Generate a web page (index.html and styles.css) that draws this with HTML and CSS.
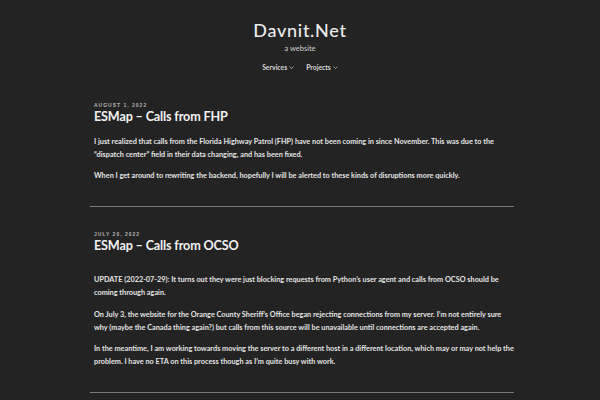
FILE: index.html
```html
<!DOCTYPE html>
<html lang="en">
<head>
<meta charset="utf-8">
<title>Davnit.Net</title>
<link rel="stylesheet" href="styles.css">
</head>
<body>
<header class="site-header">
  <h1 class="site-title">Davnit.Net</h1>
  <p class="tagline">a website</p>
  <nav class="menu">
    <span class="menu-item">Services <svg class="chev" viewBox="0 0 10 6" width="5" height="3"><path d="M1 1l4 4 4-4" fill="none" stroke="currentColor" stroke-width="1.4"/></svg></span>
    <span class="menu-item">Projects <svg class="chev" viewBox="0 0 10 6" width="5" height="3"><path d="M1 1l4 4 4-4" fill="none" stroke="currentColor" stroke-width="1.4"/></svg></span>
  </nav>
</header>
<main class="content">
  <article class="post">
    <div class="post-date">August 1, 2022</div>
    <h2 class="post-title">ESMap – Calls from FHP</h2>
    <div class="post-body">
      <p>I just realized that calls from the Florida Highway Patrol (FHP) have not been coming in since November. This was due to the “dispatch center” field in their data changing, and has been fixed.</p>
      <p>When I get around to rewriting the backend, hopefully I will be alerted to these kinds of disruptions more quickly.</p>
    </div>
  </article>
  <hr class="sep">
  <article class="post">
    <div class="post-date">July 20, 2022</div>
    <h2 class="post-title">ESMap – Calls from OCSO</h2>
    <div class="post-body spaced">
      <p>UPDATE (2022-07-29): It turns out they were just blocking requests from Python’s user agent and calls from OCSO should be coming through again.</p>
      <p>On July 3, the website for the Orange County Sheriff’s Office began rejecting connections from my server. I’m not entirely sure why (maybe the Canada thing again?) but calls from this source will be unavailable until connections are accepted again.</p>
      <p>In the meantime, I am working towards moving the server to a different host in a different location, which may or may not help the problem. I have no ETA on this process though as I’m quite busy with work.</p>
    </div>
  </article>
  <hr class="sep">
</main>
</body>
</html>
```

FILE: styles.css
```css
html, body {
  margin: 0;
  padding: 0;
  background: #232323;
}
body {
  color: #e6e6e6;
  font-family: "Lato", "Libre Franklin", "Noto Sans", sans-serif;
  overflow: hidden;
  height: 400px;
}
.site-header {
  text-align: center;
  padding-top: 20px;
}
.site-title {
  margin: 0;
  font-family: "Lato", sans-serif;
  font-size: 18px;
  line-height: 20px;
  font-weight: 500;
  letter-spacing: 0.7px;
  color: #ececec;
}
.tagline {
  margin: 4px 0 0;
  font-size: 7.5px;
  line-height: 10px;
  color: #cfcfcf;
}
.menu {
  margin-top: 8px;
  display: flex;
  justify-content: center;
  gap: 12px;
  font-size: 6.8px;
  line-height: 10px;
  font-weight: 700;
  color: #d8d8d8;
}
.menu-item {
  display: inline-flex;
  align-items: center;
  gap: 2px;
}
.chev {
  display: block;
  margin-top: 1px;
}
.content {
  width: 424px;
  margin: 29px 0 0 90px;
}
.post {
  padding-left: 4px;
}
.post-date {
  font-family: "Liberation Sans", Arial, sans-serif;
  font-size: 5px;
  line-height: 8px;
  font-weight: 700;
  letter-spacing: 1px;
  text-transform: uppercase;
  color: #b5b5b5;
}
.post-title {
  margin: 0;
  font-family: "Lato", sans-serif;
  font-size: 12.6px;
  line-height: 16px;
  font-weight: 700;
  letter-spacing: -0.15px;
  color: #f2f2f2;
}
.post-body {
  margin-top: 9.5px;
  font-size: 7.3px;
  line-height: 13px;
  font-weight: 700;
  color: #e4e4e4;
}
.post-body.spaced {
  margin-top: 19.5px;
}
.post-body p {
  margin: 0 0 8.5px;
}
.post-body p:last-child {
  margin-bottom: 0;
}
.sep {
  margin: 23.5px 0 23px;
  border: 0;
  height: 1px;
  background: #7a7a7a;
}
```
